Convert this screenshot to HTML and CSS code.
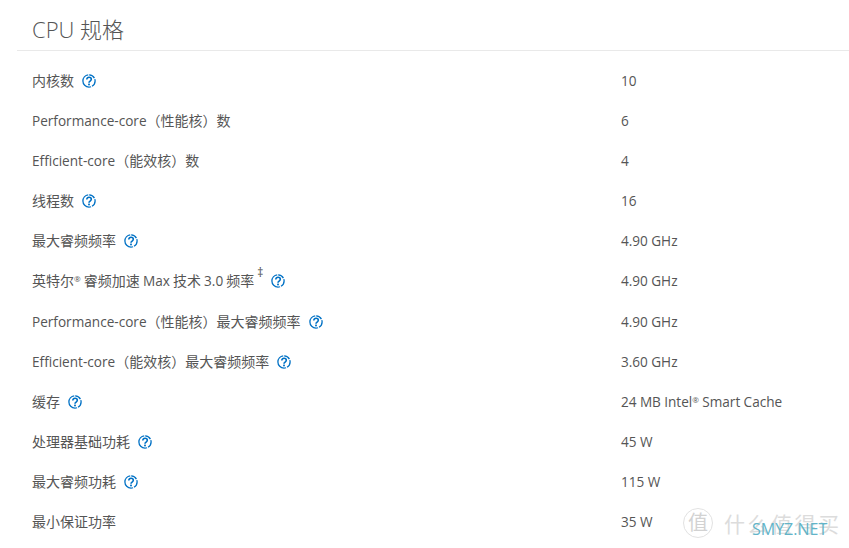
FILE: index.html
```html
<!DOCTYPE html>
<html lang="zh-CN">
<head>
<meta charset="utf-8">
<title>CPU 规格</title>
<link rel="stylesheet" href="styles.css">
</head>
<body>
<svg class="defs" width="0" height="0" aria-hidden="true"><defs>
<symbol id="q" viewBox="0 0 14 14">
<circle cx="7" cy="7" r="6.1" fill="none" stroke="#0071c5" stroke-width="1.3" stroke-dasharray="6.2 1 20 1"/>
<path d="M4.8 5.5C4.8 4.1 5.8 3.3 7 3.3c1.3 0 2.3.8 2.3 2 0 1.8-2.3 1.7-2.3 3.4" fill="none" stroke="#0071c5" stroke-width="1.6"/>
<rect x="6.1" y="9.6" width="1.8" height="1.7" fill="#0071c5"/>
</symbol>
</defs></svg>
<main class="page">
<h2 class="title">CPU 规格</h2>
<ul class="specs">
<li class="row"><span class="label"><span class="zh">内核数</span><svg class="help"><use href="#q"/></svg></span><span class="value">10</span></li>
<li class="row"><span class="label"><span>Performance-core<span class="zh">（性能核）数</span></span></span><span class="value">6</span></li>
<li class="row"><span class="label"><span>Efficient-core<span class="zh">（能效核）数</span></span></span><span class="value">4</span></li>
<li class="row"><span class="label"><span class="zh">线程数</span><svg class="help"><use href="#q"/></svg></span><span class="value">16</span></li>
<li class="row"><span class="label"><span class="zh">最大睿频频率</span><svg class="help"><use href="#q"/></svg></span><span class="value">4.90 GHz</span></li>
<li class="row"><span class="label"><span class="tight"><span class="zh">英特尔</span><sup class="reg">®</sup> <span class="zh">睿频加速</span> Max <span class="zh">技术</span> 3.0 <span class="zh">频率</span></span><sup class="mark">‡</sup><svg class="help"><use href="#q"/></svg></span><span class="value">4.90 GHz</span></li>
<li class="row"><span class="label"><span>Performance-core<span class="zh">（性能核）最大睿频频率</span></span><svg class="help"><use href="#q"/></svg></span><span class="value">4.90 GHz</span></li>
<li class="row"><span class="label"><span>Efficient-core<span class="zh">（能效核）最大睿频频率</span></span><svg class="help"><use href="#q"/></svg></span><span class="value">3.60 GHz</span></li>
<li class="row"><span class="label"><span class="zh">缓存</span><svg class="help"><use href="#q"/></svg></span><span class="value">24 MB Intel<sup class="reg">®</sup> Smart Cache</span></li>
<li class="row"><span class="label"><span class="zh">处理器基础功耗</span><svg class="help"><use href="#q"/></svg></span><span class="value">45 W</span></li>
<li class="row"><span class="label"><span class="zh">最大睿频功耗</span><svg class="help"><use href="#q"/></svg></span><span class="value">115 W</span></li>
<li class="row"><span class="label"><span class="zh">最小保证功率</span></span><span class="value">35 W</span></li>
</ul>
</main>
<div class="wm-logo"><span class="wm-seal">值</span><span class="wm-name">什么值得买</span></div>
<div class="wm-site">SMYZ.NET</div>
</body>
</html>
```
FILE: styles.css
```css
html, body { margin: 0; padding: 0; height: 548px; overflow: hidden; background: #fff; }
body { font-family: "Open Sans", "Noto Sans CJK SC", sans-serif; color: #555; font-size: 13.6px; font-variant-ligatures: none; }
.defs { position: absolute; }
.page { padding-left: 17px; }
.title { margin: 0; height: 51px; box-sizing: border-box; padding: 15px 0 0 15px; border-bottom: 1px solid #e9e9e9; font-size: 22px; line-height: 28px; font-weight: 300; color: #555; }
.specs { list-style: none; margin: 0; padding: 10px 0 0 15px; }
.row { display: grid; grid-template-columns: 589px 1fr; height: 40.09px; align-items: center; line-height: 20px; }
.label { display: flex; align-items: center; height: 20px; }
.tight { word-spacing: -.4px; }
.zh { font-size: 14px; }
.reg { font-size: 8px; line-height: 0; vertical-align: 4px; }
.value { word-spacing: -.2px; }
.mark { font-size: 12px; line-height: 12px; margin: -4px 0 0 3px; align-self: flex-start; }
.help { width: 14px; height: 14px; margin-left: 8px; flex: none; }
.wm-logo { position: absolute; left: 683px; top: 508px; display: flex; align-items: center; gap: 11px; color: #dcdcdc; }
.wm-seal { width: 28px; height: 28px; border: 1px solid #e2e2e2; border-radius: 50%; font-size: 20px; line-height: 28px; text-align: center; color: #d2d2d2; }
.wm-name { font-size: 21px; letter-spacing: 2.5px; white-space: nowrap; }
.wm-site { position: absolute; left: 752px; top: 518px; font-size: 16px; line-height: 22px; color: #62b4c8; }
```
